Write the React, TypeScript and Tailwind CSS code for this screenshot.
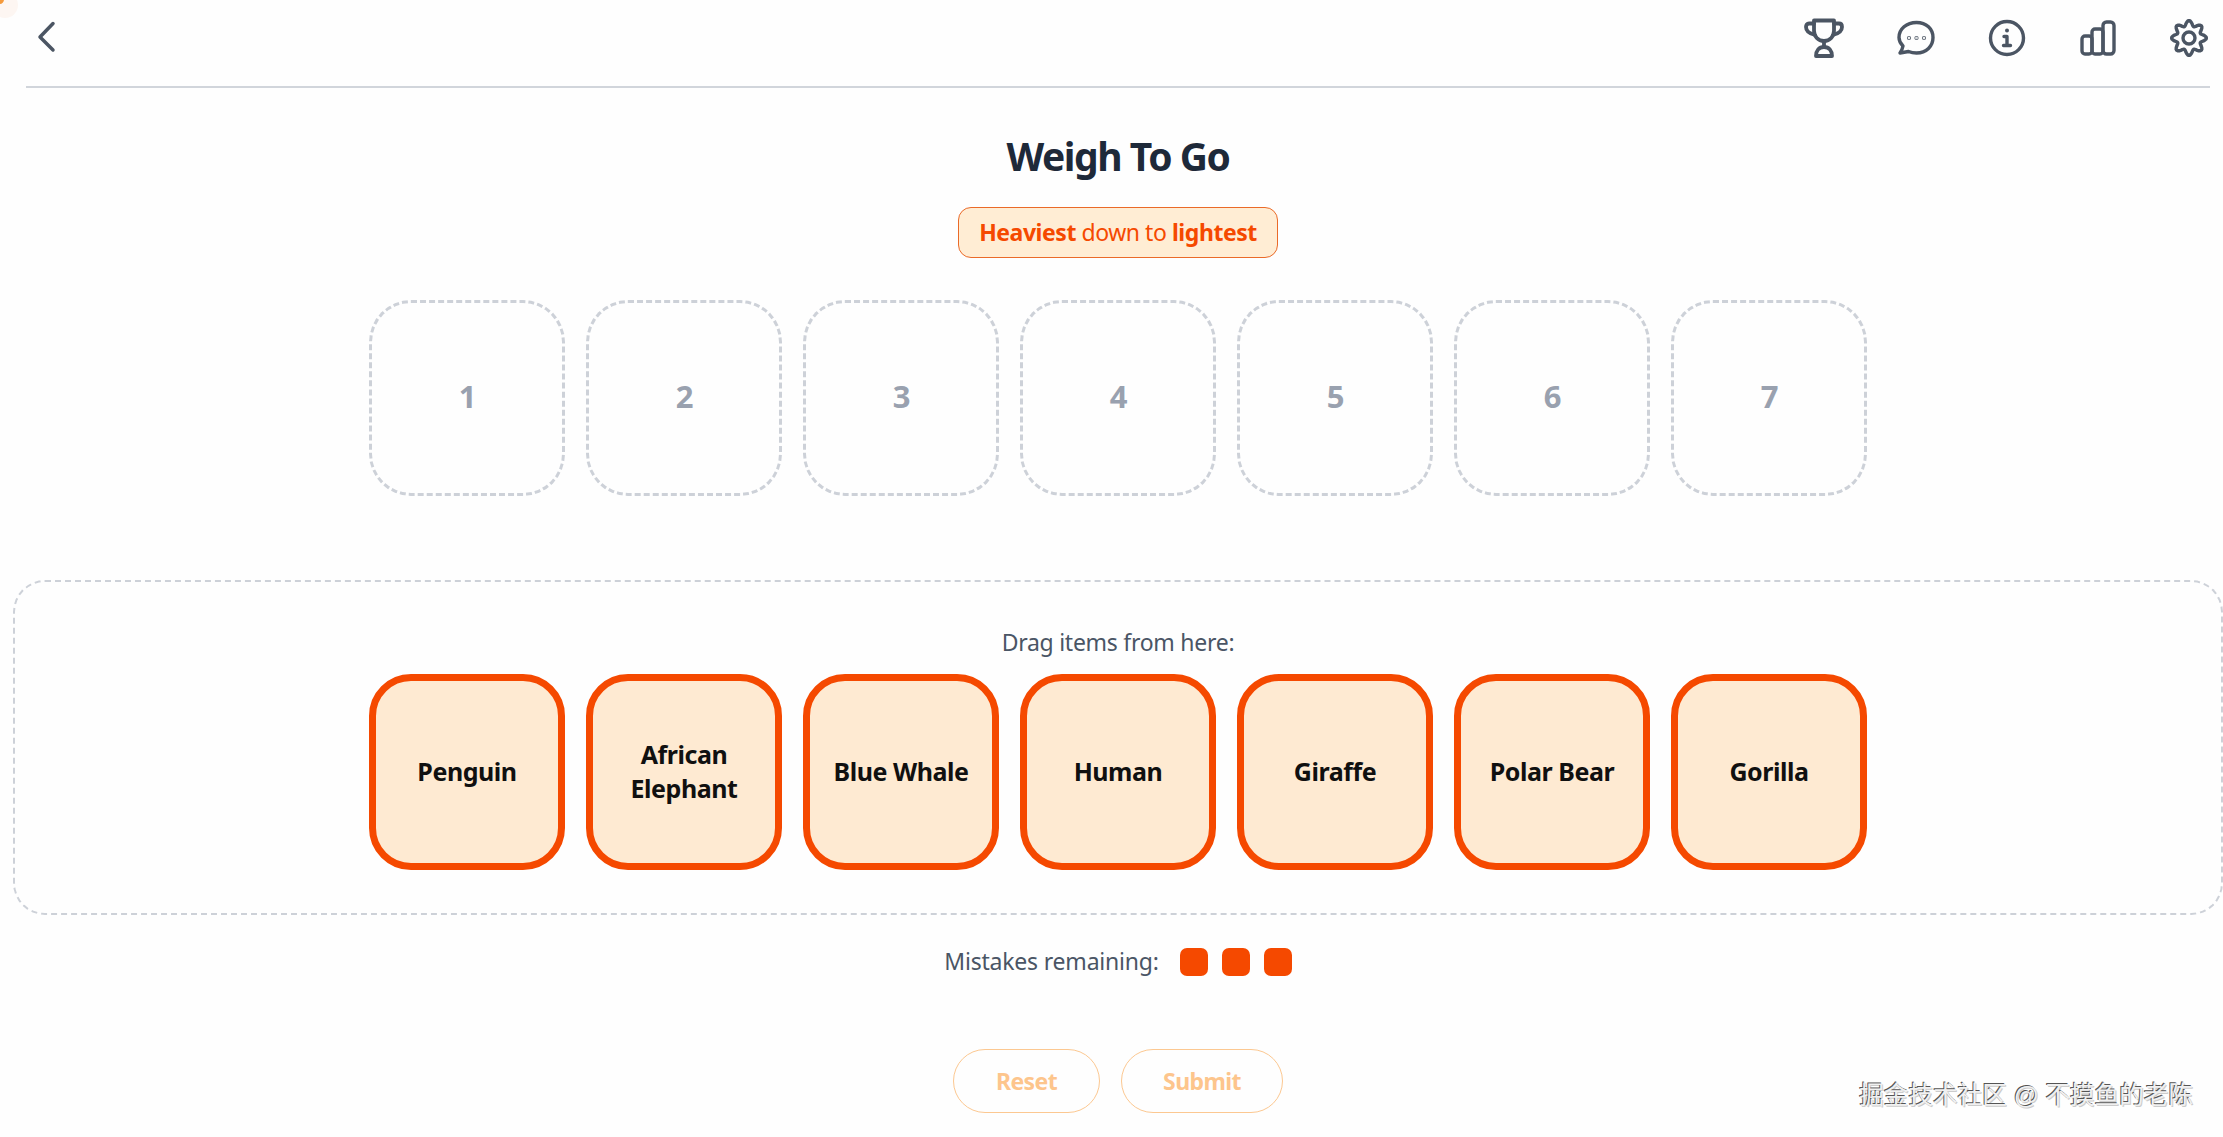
const slots = [1, 2, 3, 4, 5, 6, 7]
const items = ['Penguin', 'African Elephant', 'Blue Whale', 'Human', 'Giraffe', 'Polar Bear', 'Gorilla']

// eight rounded lobes, none of the icon packs has this gear
function gearPath() {
  const pts: string[] = []
  for (let i = 0; i < 96; i++) {
    const a = (i / 96) * Math.PI * 2
    const r = 14.8 + 2.6 * Math.cos(8 * a)
    pts.push(`${(19 + r * Math.sin(a)).toFixed(2)} ${(19 - r * Math.cos(a)).toFixed(2)}`)
  }
  return `M${pts.join('L')}Z`
}

function TrophyIcon() {
  return (
    <svg width="40" height="40" viewBox="0 0 40 40" fill="none" stroke="#4b5563" strokeWidth="3.800" strokeLinecap="round" strokeLinejoin="round">
      <path d="M10 2.500h20v10c0 6-4 10.500-10 10.500S10 18.500 10 12.500v-10Z" />
      <path d="M10 5.500H5C3 5.500 2 7 2 9c0 3.500 3 6.500 9 8" />
      <path d="M30 5.500h5c2 0 3 1.500 3 3.500 0 3.500-3 6.500-9 8" />
      <path d="M20 23v6" />
      <path d="M12 38c0-5.500 3-9 8-9s8 3.500 8 9H12Z" />
    </svg>
  )
}

function ChatIcon() {
  return (
    <svg width="38" height="38" viewBox="0 0 38 38" fill="none" stroke="#4b5563" strokeWidth="3.400" strokeLinecap="round" strokeLinejoin="round">
      <path d="M6 27C3.500 24.500 2 22 2 18.500 2 10 9.500 3.500 19.500 3.500S36 10 36 18.500 29.500 34 19.500 34c-3 0-5.500-.5-8-1.500L3 34c1.500-2 2.500-4.500 3-7Z" />
      <circle cx="12" cy="19" r="0.4" fill="#4b5563" />
      <circle cx="19.500" cy="19" r="0.4" fill="#4b5563" />
      <circle cx="27" cy="19" r="0.4" fill="#4b5563" />
    </svg>
  )
}

function InfoIcon() {
  return (
    <svg width="38" height="38" viewBox="0 0 38 38" fill="none" stroke="#4b5563" strokeWidth="3.400" strokeLinecap="round" strokeLinejoin="round">
      <circle cx="19" cy="19" r="16.500" />
      <circle cx="19" cy="11.500" r="2" fill="#4b5563" stroke="none" />
      <path d="M16 17.500h3v9M15.500 26.500h7" />
    </svg>
  )
}

function BarsIcon() {
  return (
    <svg width="38" height="38" viewBox="0 0 38 38" fill="none" stroke="#4b5563" strokeWidth="3.400" strokeLinecap="round" strokeLinejoin="round">
      <rect x="3" y="17" width="10" height="18" rx="3" />
      <rect x="13" y="10" width="11" height="25" rx="3" />
      <rect x="24" y="3" width="11" height="32" rx="3.500" />
    </svg>
  )
}

function GearIcon() {
  return (
    <svg width="38" height="38" viewBox="0 0 38 38" fill="none" stroke="#4b5563" strokeWidth="3.400" strokeLinejoin="round">
      <path d={gearPath()} />
      <circle cx="19" cy="19" r="6" />
    </svg>
  )
}

export default function App() {
  return (
    <div className="relative h-[1137px] overflow-hidden bg-[#fefefe] pl-[13px] font-['Noto_Sans',sans-serif]">
      <div className="absolute left-[-8px] top-[-8px] h-[26px] w-[26px] rounded-full bg-[#fdf6f2]" />
      <div className="absolute left-[-5px] top-[-5px] h-[9px] w-[9px] rounded-full bg-[#f59a3c]" />
      <header className="mx-[13px] flex h-[88px] items-start justify-between border-b-2 border-[#d1d5db] pt-[18px]">
        <svg width="38" height="38" viewBox="0 0 38 38" fill="none" stroke="#4b5563" strokeWidth="3.500" strokeLinecap="round" strokeLinejoin="round" className="ml-[1px]">
          <path d="M26 5.500 13 19 26 32" />
        </svg>
        <div className="flex items-center gap-[53px] pr-[2px]">
          <TrophyIcon />
          <ChatIcon />
          <InfoIcon />
          <BarsIcon />
          <GearIcon />
        </div>
      </header>

      <main className="flex flex-col items-center">
        <h1 className="mt-[40px] text-[39px] leading-[56px] font-bold tracking-[-1.450px] text-[#1e2939]">Weigh To Go</h1>
        <div className="mt-[23px] flex h-[51px] w-[320px] items-center justify-center rounded-[13px] border border-[#ea6a28] bg-[#ffedd4] text-[23px] tracking-[-0.450px] text-[#f54900]">
          <span><b className="font-bold">Heaviest</b> down to <b className="font-bold">lightest</b></span>
        </div>

        <div className="mt-[42px] flex gap-[21px]">
          {slots.map((n) => (
            <div key={n} className="flex h-[196px] w-[196px] items-center justify-center rounded-[42px] border-[3px] border-dashed border-[#cdd1d8] pb-[3px] text-[31px] font-bold tracking-[-1px] text-[#99a1af]">
              {n}
            </div>
          ))}
        </div>

        <section className="mt-[84px] flex h-[335px] w-full flex-col items-center rounded-[32px] border-2 border-dashed border-[#cdd1d8] pt-[44px]">
          <p className="text-[23px] leading-[32px] tracking-[-0.270px] text-[#4a5565]">Drag items from here:</p>
          <div className="mt-[16px] flex gap-[21px]">
            {items.map((item) => (
              <div key={item} className="flex h-[196px] w-[196px] items-center justify-center rounded-[42px] border-[7px] border-[#f54900] bg-[#feead2] px-3 pb-[3px] text-center text-[25px] leading-[34px] font-bold tracking-[-0.450px] text-[#101010]">
                {item}
              </div>
            ))}
          </div>
        </section>

        <div className="mt-[30px] flex items-center">
          <span className="pb-[2px] text-[23px] leading-[32px] tracking-[-0.200px] text-[#4a5565]">Mistakes remaining:</span>
          <div className="ml-[21px] flex gap-[14px]">
            <span className="h-[28px] w-[28px] rounded-[7px] bg-[#f54900]" />
            <span className="h-[28px] w-[28px] rounded-[7px] bg-[#f54900]" />
            <span className="h-[28px] w-[28px] rounded-[7px] bg-[#f54900]" />
          </div>
        </div>

        <div className="mt-[70px] flex gap-[21px]">
          <button className="h-[64px] w-[147px] rounded-full border border-[#fcc891] text-[23px] font-bold tracking-[-0.600px] text-[#fdc58c]">Reset</button>
          <button className="h-[64px] w-[162px] rounded-full border border-[#fcc891] text-[23px] font-bold tracking-[-0.600px] text-[#fdc58c]">Submit</button>
        </div>
      </main>

      <div className="absolute bottom-[26px] right-[30px] font-['Liberation_Sans','Noto_Sans_CJK_SC',sans-serif] text-[24.600px] leading-[30px] text-[#f0f0f0] [text-shadow:-1px_-1px_0_#555,1px_1px_0_#ccc]">
        掘金技术社区 @ 不摸鱼的老陈
      </div>
    </div>
  )
}
